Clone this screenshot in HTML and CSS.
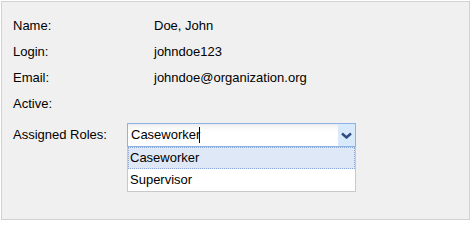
FILE: index.html
```html
<!DOCTYPE html>
<html>
<head>
<meta charset="utf-8">
<link rel="stylesheet" href="styles.css">
</head>
<body>
<div class="panel">
  <div class="fields">
    <div class="label">Name:</div><div class="value">Doe, John</div>
    <div class="label">Login:</div><div class="value">johndoe123</div>
    <div class="label">Email:</div><div class="value">johndoe@organization.org</div>
    <div class="label">Active:</div><div class="value"></div>
  </div>
  <div class="roles-row">
    <div class="roles-label">Assigned Roles:</div>
    <div class="combo">
      <div class="combo-input"><span class="combo-text">Caseworker</span><span class="caret"></span></div>
      <div class="combo-btn">
        <svg width="11" height="7" viewBox="0 0 11 7"><polyline points="1,1.5 5.5,5.5 10,1.5" fill="none" stroke="#2e4a80" stroke-width="2.4"/></svg>
      </div>
      <div class="combo-list">
        <div class="item item-active">Caseworker</div>
        <div class="item">Supervisor</div>
      </div>
    </div>
  </div>
</div>
</body>
</html>
```
FILE: styles.css
```css
html, body {
  margin: 0;
  padding: 0;
  background: #ffffff;
}
body {
  font-family: "Liberation Sans", Arial, sans-serif;
  font-size: 13px;
  color: #000;
}
.panel {
  margin: 1px 0 0 1px;
  width: 469px;
  height: 219px;
  box-sizing: border-box;
  background: #f0f0f0;
  border: 1px solid #d2d2d2;
  padding: 11px 0 0 11px;
}
.fields {
  display: grid;
  grid-template-columns: 141px 1fr;
  grid-auto-rows: 26px;
  line-height: 26px;
}
.roles-row {
  display: flex;
  align-items: flex-start;
  margin-top: 6px;
}
.roles-label {
  width: 114px;
  line-height: 24px;
}
.combo {
  position: relative;
  width: 229px;
  height: 24px;
  box-sizing: border-box;
  border: 1px solid #8db2e3;
  background: linear-gradient(#ececec 0, #fafafa 4px, #ffffff 8px);
  display: flex;
}
.combo-input {
  flex: 1;
  padding-left: 3px;
  line-height: 22px;
  display: flex;
  align-items: center;
}
.caret {
  display: inline-block;
  width: 1px;
  height: 16px;
  background: #000;
  margin-left: -1px;
}
.combo-btn {
  width: 17px;
  background: #d9e9fc;
  display: flex;
  align-items: center;
  justify-content: center;
}
.combo-list {
  position: absolute;
  left: -1px;
  top: 23px;
  width: 229px;
  box-sizing: border-box;
  border: 1px solid #c9c9c9;
  border-top: none;
  background: #fff;
}
.item {
  height: 22px;
  box-sizing: border-box;
  border: 1px dotted transparent;
  padding-left: 1px;
  line-height: 20px;
}
.item-active {
  background: #dfe8f6;
  border-color: #8aa7d6;
}
```
